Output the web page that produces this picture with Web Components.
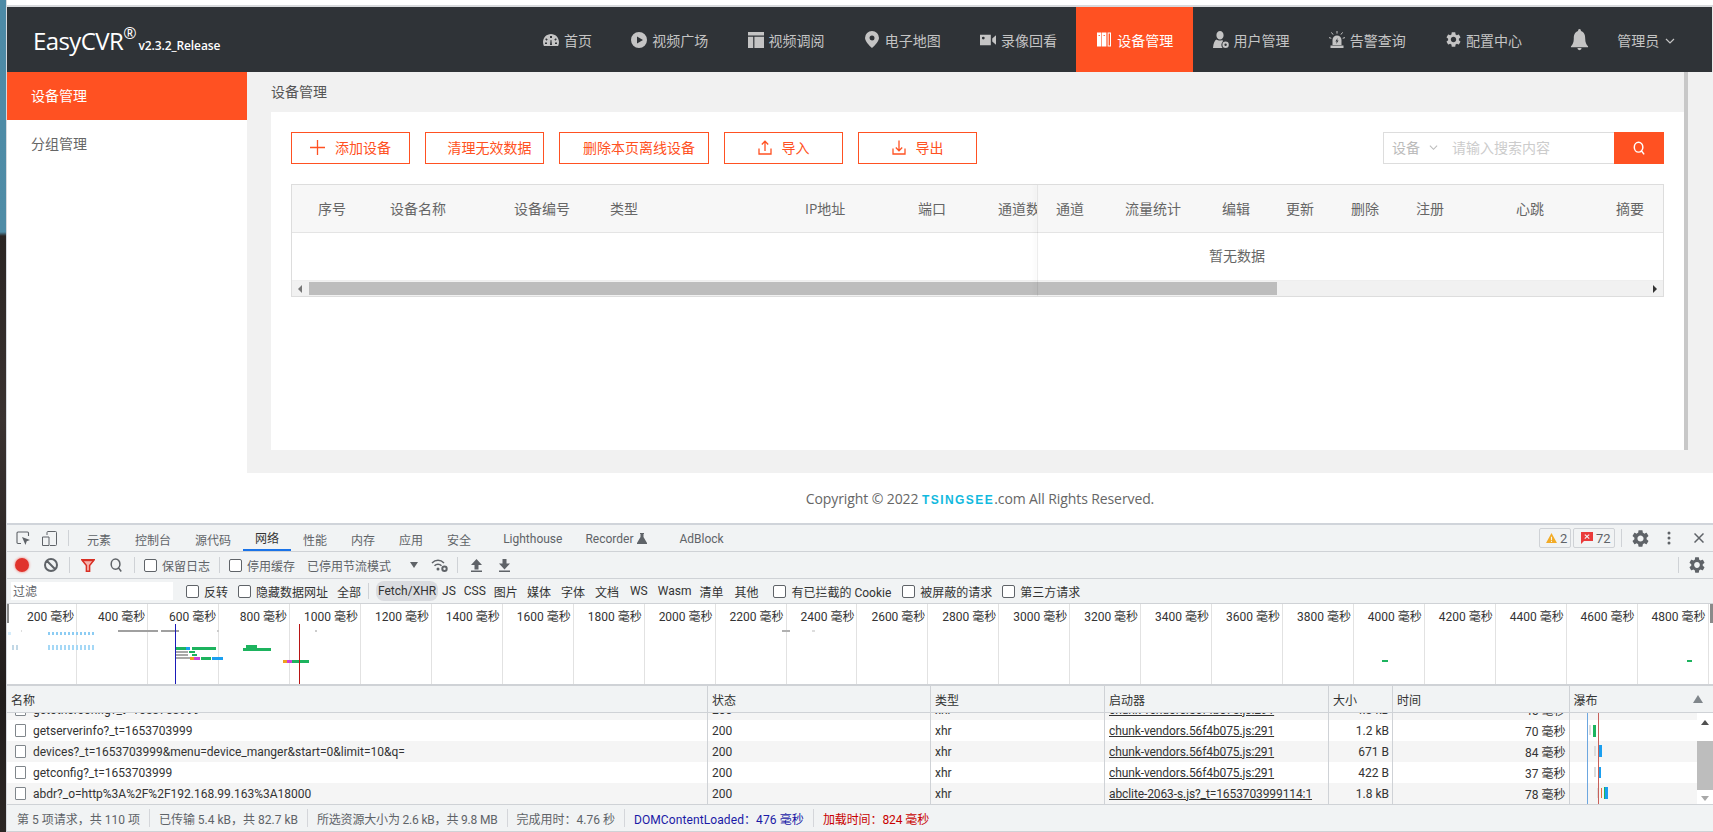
<!DOCTYPE html>
<html lang="zh">
<head>
<meta charset="utf-8">
<title>EasyCVR</title>
<style>
    html, body{ margin: 0; height: 832px; overflow: hidden; }
    body{
        display: flex;
        flex-direction: row;
        font-family: "Open Sans", "Noto Sans CJK SC", sans-serif;
        font-size: 14px;
        color: #666;
    }
</style>
</head>
<body>

<template cvr-wall>
    <style>
        :host{
            display: block;
            width: 6px;
            flex: none;
            background: linear-gradient(#4d8aa6 0, #4f8ca6 232px, #2a2523 236px, #3a3230 420px, #211d1c 700px, #2c2624 832px);
        }
    </style>
</template>

<template cvr-window>
    <style>
        :host{
            display: flex;
            flex-direction: column;
            flex: 1;
            min-width: 0;
            background: #fff;
            border-left: 1px solid #d6d9de;
        }
        #top{
            height: 5px;
            border-bottom: 2px solid #d8dadd;
        }
    </style>
    <div id=top></div>
    <slot></slot>
</template>

<template cvr-nav>
    <style>
        :host{
            display: flex;
            flex-direction: row;
            height: 65px;
            flex: none;
            background: #2f3337;
            color: #c4c4c4;
            border-right: 1px solid #e8e8e8;
        }
        #logo{
            width: 516px;
            padding-left: 26px;
            display: flex;
            align-items: baseline;
            color: #fff;
            padding-top: 12px;
            box-sizing: border-box;
            line-height: 44px;
            white-space: nowrap;
        }
        #name{ font-size: 24px; letter-spacing: -.6px; }
        sup{ font-size: 16px; line-height: 0; position: relative; top: -11px; margin: 0 2px 0 0; }
        #ver{ font-size: 12px; font-weight: 600; letter-spacing: -.1px; }
        nav{ display: flex; flex-direction: row; }
        #right{
            display: flex;
            align-items: center;
            padding-left: 29px;
        }
        #user{ margin-left: 28px; margin-right: 6px; white-space: nowrap; }
        #chev{ margin-top: 2px; }
    </style>
    <div id=logo><span id=name>EasyCVR</span><sup>®</sup><span id=ver>v2.3.2_Release</span></div>
    <nav><slot></slot></nav>
    <div id=right>
        <cvr-icon name=bell w=19 h=22></cvr-icon>
        <span id=user>管理员</span>
        <cvr-icon id=chev name=chevron w=10 h=10></cvr-icon>
    </div>
</template>

<template cvr-nav-item>
    <style>
        :host{
            display: flex;
            align-items: center;
            height: 65px;
            padding-left: 20px;
            padding-right: 19.25px;
            white-space: nowrap;
            cursor: pointer;
        }
        :host([active]){
            background: #ff5122;
            color: #fff;
        }
        #ico{ width: 16px; margin-right: 5px; display: flex; justify-content: center; }
    </style>
    <div id=ico></div>
    <slot></slot>
</template>

<template cvr-body>
    <style>
        :host{
            display: flex;
            flex-direction: row;
            height: 451px;
            flex: none;
        }
        #main{
            flex: 1;
            min-width: 0;
            display: flex;
            flex-direction: column;
        }
    </style>
    <slot name=side></slot>
    <div id=main><slot></slot></div>
</template>

<template cvr-side>
    <style>
        :host{
            display: block;
            width: 240px;
            flex: none;
            background: #fff;
        }
    </style>
    <slot></slot>
</template>

<template cvr-side-item>
    <style>
        :host{
            display: flex;
            align-items: center;
            height: 48px;
            box-sizing: border-box;
            padding-left: 24px;
            padding-bottom: 2px;
            color: #666;
            cursor: pointer;
        }
        :host([active]){
            background: #ff5122;
            color: #fff;
        }
    </style>
    <slot></slot>
</template>

<template cvr-panel>
    <style>
        :host{
            display: flex;
            flex-direction: row;
            height: 401px;
            flex: none;
            background: #f1f1f1;
        }
        #col{
            flex: 1;
            min-width: 0;
            padding-left: 24px;
        }
        #title{
            height: 40px;
            line-height: 40px;
            color: #555;
        }
        #card{
            height: 338px;
            box-sizing: border-box;
            padding: 20px;
            background: #fff;
        }
        #bar{
            width: 4px;
            height: 378px;
            background: #c8c8c8;
            margin-right: 25px;
        }
    </style>
    <div id=col>
        <div id=title>设备管理</div>
        <div id=card><slot></slot></div>
    </div>
    <div id=bar></div>
</template>

<template cvr-tools>
    <style>
        :host{
            display: flex;
            flex-direction: row;
            gap: 15px;
            height: 32px;
        }
        #space{ flex: 1; }
    </style>
    <slot></slot>
    <div id=space></div>
    <slot name=end></slot>
</template>

<template cvr-btn>
    <style>
        :host{
            display: flex;
            align-items: center;
            justify-content: center;
            box-sizing: border-box;
            width: 119px;
            height: 32px;
            border: 1px solid #ff5122;
            padding-bottom: 2px;
            color: #ff5122;
            cursor: pointer;
            white-space: nowrap;
        }
        #ico{ margin-right: 10px; display: flex; }
    </style>
    <div id=ico></div>
    <slot></slot>
</template>

<template cvr-search>
    <style>
        :host{
            display: flex;
            flex-direction: row;
            width: 281px;
            height: 32px;
        }
        #box{
            flex: 1;
            display: flex;
            align-items: center;
            box-sizing: border-box;
            border: 1px solid #ddd;
            border-right: 0;
            padding-left: 8px;
            padding-bottom: 2px;
            color: #bbb;
            white-space: nowrap;
        }
        #ph{ margin-left: 14px; color: #ccc; }
        #sel{ margin-left: 9px; }
        #go{
            width: 50px;
            background: #ff5122;
            color: #fff;
            display: flex;
            align-items: center;
            justify-content: center;
        }
    </style>
    <div id=box>
        <span>设备</span>
        <cvr-icon id=sel name=chevron w=9 h=9></cvr-icon>
        <span id=ph>请输入搜索内容</span>
    </div>
    <div id=go><cvr-icon name=search w=12 h=14></cvr-icon></div>
</template>

<template cvr-table>
    <style>
        :host{
            display: block;
            position: relative;
            margin-top: 20px;
            height: 113px;
            box-sizing: border-box;
            border: 1px solid #ddd;
            color: #666;
        }
        #panes{
            display: flex;
            flex-direction: row;
            height: 95px;
        }
        .head{
            display: grid;
            align-items: center;
            background: #f7f7f7;
            border-bottom: 1px solid #e4e4e4;
            white-space: nowrap;
            overflow: hidden;
            padding-bottom: 1px;
            height: 46px;
        }
        #left{ width: 745px; flex: none; overflow: hidden; }
        #left .head{
            padding-left: 26px;
            grid-template-columns: 72px 124px 96px 195px 113px 80px 1fr;
        }
        #right{ flex: 1; min-width: 0; }
        #right .head{
            padding-left: 19px;
            grid-template-columns: 69px 97px 64px 65px 65px 100px 100px 1fr;
        }
        #empty{
            height: 43px;
            padding-bottom: 4px;
            padding-left: 172px;
            display: flex;
            align-items: center;
            color: #666;
        }
        #scroll{
            display: flex;
            align-items: center;
            height: 16px;
            background: #f1f1f1;
            border-top: 1px solid #eee;
            box-sizing: border-box;
        }
        #thumb{
            width: 968px;
            height: 13px;
            margin-left: 7px;
            background: #bdbdbd;
        }
        #space{ flex: 1; }
        .arr{ width: 0; height: 0; border: 4px solid transparent; }
        #al{ border-right: 4px solid #777; border-left: 0; margin-left: 6px; }
        #ar{ border-left: 4px solid #333; border-right: 0; margin-right: 6px; }
        #fix{
            position: absolute;
            left: 745px;
            top: 0;
            bottom: 0;
            width: 1px;
            background: rgba(0,0,0,.07);
            box-shadow: -2px 0 4px rgba(0,0,0,.09);
        }
    </style>
    <div id=panes>
        <div id=left>
            <div class=head id=lh></div>
        </div>
        <div id=right>
            <div class=head id=rh></div>
            <div id=empty><span>暂无数据</span></div>
        </div>
    </div>
    <div id=scroll>
        <div class=arr id=al></div>
        <div id=thumb></div>
        <div id=space></div>
        <div class=arr id=ar></div>
    </div>
    <div id=fix></div>
</template>

<template cvr-footer>
    <style>
        :host{
            display: flex;
            justify-content: center;
            align-items: center;
            height: 50px;
            flex: none;
            background: #fff;
            color: #666;
            white-space: nowrap;
            box-sizing: border-box;
        }
        span{ letter-spacing: -.1px; }
        b{
            display: inline-block;
            color: #12b9de;
            font-family: "Liberation Sans", sans-serif;
            font-size: 12px;
            line-height: 12px;
            font-weight: 700;
            letter-spacing: 1.45px;
            text-transform: uppercase;
        }
    </style>
    <span>Copyright © 2022 <b>Tsingsee</b>.com All Rights Reserved.</span>
</template>

<template dev-tools>
    <style>
        :host{
            display: flex;
            flex-direction: column;
            flex: 1;
            min-height: 0;
            background: #f1f3f4;
            border-top: 2px solid #d0d4da;
            font-family: Roboto, "Noto Sans CJK SC", sans-serif;
            font-size: 12px;
            color: #5f6368;
        }
    </style>
    <slot></slot>
</template>

<template dev-bar>
    <style>
        :host{
            display: flex;
            flex-direction: row;
            align-items: center;
            flex: none;
            box-sizing: border-box;
            height: 27px;
            border-bottom: 1px solid #cfd2d6;
            white-space: nowrap;
        }
    </style>
    <slot></slot>
</template>

<template dev-tab>
    <style>
        :host{
            display: flex;
            align-items: center;
            height: 26px;
            box-sizing: border-box;
            padding: 2px 12px 0;
            cursor: default;
        }
        :host([active]){
            border-bottom: 2px solid #1a73e8;
            padding-top: 0;
            color: #333;
        }
    </style>
    <slot></slot>
</template>

<template dev-check>
    <style>
        :host{
            display: inline-flex;
            align-items: center;
            gap: 5px;
        }
        i{
            display: block;
            width: 11px;
            height: 11px;
            border: 1px solid #5f6368;
            border-radius: 2px;
            background: #fff;
        }
    </style>
    <i></i><slot></slot>
</template>

<template dev-overview>
    <style>
        :host{
            display: block;
            position: relative;
            flex: none;
            height: 80px;
            background: #fff;
            border-bottom: 2px solid #cfd2d6;
            overflow: hidden;
            color: #333;
        }
        #grid{
            display: flex;
            flex-direction: row;
            height: 80px;
        }
        .c{
            flex: none;
            width: 70.93px;
            box-sizing: border-box;
            border-right: 1px solid #e2e2e2;
            text-align: right;
            padding-right: 2px;
            line-height: 26px;
            white-space: nowrap;
        }
        .c:first-child{ width: 70.3px; }
        .m{ position: absolute; }
    </style>
    <div id=grid></div>
</template>

<template dev-net>
    <style>
        :host{
            display: block;
            flex: none;
            color: #333;
        }
        #head{
            display: grid;
            grid-template-columns: 701px 223px 174px 224px 64px 176.5px 1fr;
            height: 27px;
            box-sizing: border-box;
            border-bottom: 1px solid #cfd2d6;
            background: #f1f3f4;
        }
        #head div{
            display: flex;
            align-items: center;
            padding-left: 4px;
            border-right: 1px solid #cfd2d6;
        }
        #head div:last-child{ border-right: 0; justify-content: space-between; padding-right: 10px; }
        #tri{ width: 0; height: 0; border: 5px solid transparent; border-top: 0; border-bottom: 8px solid #80868b; }
        #wrap{
            display: flex;
            flex-direction: row;
            height: 91px;
            overflow: hidden;
        }
        #rows{
            flex: 1;
            min-width: 0;
            position: relative;
        }
        #list{ margin-top: -14px; }
        #sb{
            flex: none;
            width: 16px;
            background: #fff;
            display: flex;
            flex-direction: column;
            align-items: center;
        }
        #t{ width: 100%; height: 49px; background: #bdbdbd; margin-top: 16px; }
        .tr{ width: 0; height: 0; border: 4px solid transparent; }
        #up{ border-top: 0; border-bottom: 5px solid #505050; margin-top: 7px; }
        #dn{ border-bottom: 0; border-top: 5px solid #a8a8a8; margin-top: 6px; }
        .v{ position: absolute; top: 0; bottom: 0; width: 1px; }
    </style>
    <div id=head>
        <div>名称</div><div>状态</div><div>类型</div><div>启动器</div><div>大小</div><div>时间</div><div>瀑布<span id=tri></span></div>
    </div>
    <div id=wrap>
        <div id=rows>
            <div id=list><slot></slot></div>
            <div class=v style="left:1580px;background:#6da7e0"></div>
            <div class=v style="left:1591px;background:#c8605a"></div>
        </div>
        <div id=sb>
            <div class=tr id=up></div>
            <div id=t></div>
            <div class=tr id=dn></div>
        </div>
    </div>
</template>

<template dev-row>
    <style>
        :host{
            display: grid;
            grid-template-columns: 701px 223px 174px 224px 64px 176.5px 1fr;
            height: 21px;
            align-items: center;
            white-space: nowrap;
            background: #fff;
        }
        :host([alt]){ background: #f5f5f5; }
        :host>div{
            height: 21px;
            display: flex;
            align-items: center;
            padding-left: 4px;
            border-right: 1px solid #cfd2d6;
            box-sizing: border-box;
            overflow: hidden;
        }
        #name i{
            display: block;
            width: 9px;
            height: 11px;
            border: 1px solid #80868b;
            border-radius: 1px;
            margin: 0 7px 0 4px;
            background: #fff;
            flex: none;
        }
        #ini{ text-decoration: underline; letter-spacing: -.1px; }
        .r{ justify-content: flex-end; padding: 0 3px 0 0; }
        #fall{ border-right: 0; position: relative; overflow: visible; }
        #fall span{ position: absolute; }
    </style>
    <div id=name><i></i><span id=n></span></div>
    <div id=st>200</div>
    <div>xhr</div>
    <div id=ini></div>
    <div class=r id=sz></div>
    <div class=r id=tm></div>
    <div id=fall></div>
</template>

<template dev-status>
    <style>
        :host{
            display: flex;
            flex-direction: row;
            align-items: center;
            box-sizing: border-box;
            flex: none;
            height: 28px;
            border-top: 1px solid #cfd2d6;
            border-bottom: 1px solid #cfd2d6;
            padding-left: 1px;
            white-space: nowrap;
        }
    </style>
    <slot></slot>
</template>

<template dev-stat>
    <style>
        :host{
            display: flex;
            align-items: center;
            height: 18px;
            padding: 0 9px;
            border-right: 1px solid #d4d6da;
        }
        :host(:last-child){ border-right: 0; }
    </style>
    <slot></slot>
</template>

<cvr-wall></cvr-wall>
<cvr-window>
    <cvr-nav>
        <cvr-nav-item icon=dash>首页</cvr-nav-item>
        <cvr-nav-item icon=play>视频广场</cvr-nav-item>
        <cvr-nav-item icon=layout>视频调阅</cvr-nav-item>
        <cvr-nav-item icon=pin>电子地图</cvr-nav-item>
        <cvr-nav-item icon=video>录像回看</cvr-nav-item>
        <cvr-nav-item icon=books active>设备管理</cvr-nav-item>
        <cvr-nav-item icon=user>用户管理</cvr-nav-item>
        <cvr-nav-item icon=alarm>告警查询</cvr-nav-item>
        <cvr-nav-item icon=gear>配置中心</cvr-nav-item>
    </cvr-nav>
    <cvr-body>
        <cvr-side slot=side>
            <cvr-side-item active>设备管理</cvr-side-item>
            <cvr-side-item>分组管理</cvr-side-item>
        </cvr-side>
        <cvr-panel>
            <cvr-tools>
                <cvr-btn icon=plus>添加设备</cvr-btn>
                <cvr-btn>清理无效数据</cvr-btn>
                <cvr-btn style="width:150px">删除本页离线设备</cvr-btn>
                <cvr-btn icon=upload>导入</cvr-btn>
                <cvr-btn icon=download>导出</cvr-btn>
                <cvr-search slot=end></cvr-search>
            </cvr-tools>
            <cvr-table></cvr-table>
        </cvr-panel>
        <cvr-footer></cvr-footer>
    </cvr-body>
    <dev-tools>
        <dev-bar style="padding-left:9px">
            <cvr-icon name=inspect w=14 h=14 style="color:#5f6368"></cvr-icon>
            <cvr-icon name=device w=15 h=15 style="color:#5f6368;margin-left:12px"></cvr-icon>
            <span style="width:1px;height:16px;background:#cfd2d6;margin:0 6px 0 11px"></span>
            <dev-tab>元素</dev-tab>
            <dev-tab>控制台</dev-tab>
            <dev-tab>源代码</dev-tab>
            <dev-tab active>网络</dev-tab>
            <dev-tab>性能</dev-tab>
            <dev-tab>内存</dev-tab>
            <dev-tab>应用</dev-tab>
            <dev-tab>安全</dev-tab>
            <dev-tab style="margin-left:8px">Lighthouse</dev-tab>
            <dev-tab style="padding-right:4px;margin-left:-1px">Recorder</dev-tab>
            <cvr-icon name=flask w=10 h=11 style="color:#5f6368"></cvr-icon>
            <dev-tab style="margin-left:20px">AdBlock</dev-tab>
            <span style="flex:1"></span>
            <span style="display:flex;align-items:center;gap:3px;height:20px;box-sizing:border-box;width:32px;padding-left:6px;border:1px solid #cfd2d6;border-radius:2px;font-size:13px"><cvr-icon name=warn w=11 h=10 style="color:#f2ab26"></cvr-icon>2</span>
            <span style="display:flex;align-items:center;gap:3px;height:20px;box-sizing:border-box;width:42px;padding-left:7px;margin-left:2px;border:1px solid #cfd2d6;border-radius:2px;font-size:13px"><cvr-icon name=err w=12 h=12 style="color:#ea3b3b"></cvr-icon>72</span>
            <span style="width:1px;height:18px;background:#cfd2d6;margin:0 10px 0 6px"></span>
            <cvr-icon name=gear w=17 h=17 style="color:#5f6368"></cvr-icon>
            <cvr-icon name=dots w=4 h=14 style="color:#5f6368;margin-left:18px"></cvr-icon>
            <cvr-icon name=close w=10 h=10 style="color:#5f6368;margin:0 9px 0 23px"></cvr-icon>
        </dev-bar>
        <dev-bar style="padding-left:8px">
            <span style="width:14px;height:14px;border-radius:50%;background:#e0332c;box-shadow:0 0 2px 1px #f1b9b5"></span>
            <cvr-icon name=stop w=14 h=14 style="color:#5f6368;margin-left:15px"></cvr-icon>
            <span style="width:1px;height:16px;background:#cfd2d6;margin:0 11px 0 11px"></span>
            <cvr-icon name=filter w=14 h=13 style="color:#d93025"></cvr-icon>
            <cvr-icon name=search w=14 h=14 style="color:#5f6368;margin-left:14px"></cvr-icon>
            <span style="width:1px;height:16px;background:#cfd2d6;margin:0 9px 0 11px"></span>
            <dev-check>保留日志</dev-check>
            <span style="width:1px;height:16px;background:#cfd2d6;margin:0 9px 0 9px"></span>
            <dev-check>停用缓存</dev-check>
            <span style="margin-left:12px">已停用节流模式</span>
            <span style="width:0;height:0;border:4px solid transparent;border-bottom:0;border-top:6px solid #5f6368;margin-left:19px"></span>
            <cvr-icon name=wifi w=17 h=14 style="color:#5f6368;margin-left:13px"></cvr-icon>
            <span style="width:1px;height:16px;background:#cfd2d6;margin:0 10px 0 9px"></span>
            <cvr-icon name=upa w=11 h=13 style="color:#5f6368;margin-left:3px"></cvr-icon>
            <cvr-icon name=downa w=11 h=13 style="color:#5f6368;margin-left:17px"></cvr-icon>
            <span style="flex:1"></span>
            <span style="width:1px;height:16px;background:#cfd2d6;margin-right:10px"></span>
            <cvr-icon name=gear w=16 h=16 style="color:#5f6368;margin-right:8px"></cvr-icon>
        </dev-bar>
        <dev-bar style="height:25px;color:#333">
            <span style="width:162px;height:18px;line-height:20px;background:#fff;margin-left:4px;padding-left:2px;box-sizing:border-box;color:#5f6368">过滤</span>
            <dev-check style="margin-left:13px">反转</dev-check>
            <dev-check style="margin-left:10px">隐藏数据网址</dev-check>
            <span style="margin-left:9px">全部</span>
            <span style="width:1px;height:16px;background:#cfd2d6;margin:0 7px 0 7px"></span>
            <span style="background:#dadce0;border-radius:8px;height:20px;line-height:20px;width:62px;text-align:center">Fetch/XHR</span>
            <span style="margin-left:4px">JS</span>
            <span style="margin-left:8px">CSS</span>
            <span style="margin-left:8px">图片</span>
            <span style="margin-left:9px">媒体</span>
            <span style="margin-left:10px">字体</span>
            <span style="margin-left:10px">文档</span>
            <span style="margin-left:11px">WS</span>
            <span style="margin-left:10px">Wasm</span>
            <span style="margin-left:8px">清单</span>
            <span style="margin-left:11px">其他</span>
            <dev-check style="margin-left:15px">有已拦截的 Cookie</dev-check>
            <dev-check style="margin-left:11px">被屏蔽的请求</dev-check>
            <dev-check style="margin-left:10px">第三方请求</dev-check>
        </dev-bar>
        <dev-overview></dev-overview>
        <dev-net>
            <dev-row alt name="getotherconfig?_t=1653703999" ini="chunk-vendors.56f4b075.js:291" sz="4.3 kB" tm="45 毫秒" fall="c"></dev-row>
            <dev-row name="getserverinfo?_t=1653703999" ini="chunk-vendors.56f4b075.js:291" sz="1.2 kB" tm="70 毫秒" fall="g"></dev-row>
            <dev-row alt name="devices?_t=1653703999&amp;menu=device_manger&amp;start=0&amp;limit=10&amp;q=" ini="chunk-vendors.56f4b075.js:291" sz="671 B" tm="84 毫秒" fall="b"></dev-row>
            <dev-row name="getconfig?_t=1653703999" ini="chunk-vendors.56f4b075.js:291" sz="422 B" tm="37 毫秒" fall="s"></dev-row>
            <dev-row alt name="abdr?_o=http%3A%2F%2F192.168.99.163%3A18000" ini="abclite-2063-s.js?_t=1653703999114:1" sz="1.8 kB" tm="78 毫秒" fall="a"></dev-row>
        </dev-net>
        <dev-status>
            <dev-stat>第 5 项请求，共 110 项</dev-stat>
            <dev-stat>已传输 5.4 kB，共 82.7 kB</dev-stat>
            <dev-stat style="letter-spacing:-.18px">所选资源大小为 2.6 kB，共 9.8 MB</dev-stat>
            <dev-stat>完成用时：4.76 秒</dev-stat>
            <dev-stat style="color:#1a1aa6;letter-spacing:.1px">DOMContentLoaded：476 毫秒</dev-stat>
            <dev-stat style="color:#c80000;letter-spacing:-.1px">加载时间：824 毫秒</dev-stat>
        </dev-status>
    </dev-tools>
</cvr-window>

<script>
    const GEAR = 'M19.14 12.94c.04-.3.06-.61.06-.94 0-.32-.02-.64-.07-.94l2.03-1.58c.18-.14.23-.41.12-.61l-1.92-3.32c-.12-.22-.37-.29-.59-.22l-2.39.96c-.5-.38-1.03-.7-1.62-.94l-.36-2.54c-.04-.24-.24-.41-.48-.41h-3.84c-.24 0-.43.17-.47.41l-.36 2.54c-.59.24-1.13.57-1.62.94l-2.39-.96c-.22-.08-.47 0-.59.22L2.74 8.87c-.12.21-.08.47.12.61l2.03 1.58c-.05.3-.09.63-.09.94s.02.64.07.94l-2.03 1.58c-.18.14-.23.41-.12.61l1.92 3.32c.12.22.37.29.59.22l2.39-.96c.5.38 1.03.7 1.62.94l.36 2.54c.05.24.24.41.48.41h3.84c.24 0 .44-.17.47-.41l.36-2.54c.59-.24 1.13-.56 1.62-.94l2.39.96c.22.08.47 0 .59-.22l1.92-3.32c.12-.22.07-.47-.12-.61l-2.01-1.58zM12 15.6c-1.98 0-3.6-1.62-3.6-3.6s1.62-3.6 3.6-3.6 3.6 1.62 3.6 3.6-1.62 3.6-3.6 3.6z'
    const fill = d => `<path fill="currentColor" fill-rule="evenodd" d="${d}"/>`
    const line = (d, w) => `<path fill="none" stroke="currentColor" stroke-width="${w || 1.2}" d="${d}"/>`

    // viewBox, content
    const ICONS = {
        dash: ['0 0 16 16', fill('M8 2C3.6 2 0 5.6 0 10c0 1.3.3 2.6.9 4h14.2c.6-1.4.9-2.7.9-4 0-4.4-3.6-8-8-8zM7 4h2v2H7zM3.2 6.2l1.5 1.4-1 1.1-1.5-1.5zM11.3 7.6l1.5-1.4 1 1-1.5 1.5zM7 13l.6-5h.8l.6 5zM2 10.5h2v1.6H2zM12 10.5h2v1.6h-2z')],
        play: ['0 0 16 16', fill('M8 0a8 8 0 1 0 0 16A8 8 0 0 0 8 0zM6 4.5l6 3.5-6 3.5z')],
        layout: ['0 0 16 16', fill('M0 0h16v3.4H0zM0 4.8h5.2V16H0zM6.4 4.8H16V16H6.4z')],
        pin: ['0 0 14 17', fill('M7 0a7 7 0 0 0-7 7c0 4 7 10 7 10s7-6 7-10a7 7 0 0 0-7-7zm0 4.5a2.5 2.5 0 1 1 0 5 2.5 2.5 0 0 1 0-5z')],
        video: ['0 0 17 14', fill('M0 1.5h11.5v11H0zM3.5 3.5a1.5 1.5 0 1 0 0 3 1.5 1.5 0 0 0 0-3zM13 5.5l4-3.5v10l-4-3.5z')],
        books: ['0 0 14 15', fill('M0 .5h4.4v14H0zM5 .5h4.4v14H5zM10.6.5H14v14h-3.4zM11.6 1.6v11.8H13V1.6zM1.6 3v1h1.2V3zM6.6 3v1h1.2V3z')],
        user: ['0 0 16 17', fill('M7 0c2 0 3.6 1.8 3.6 4.2S9 8.6 7 8.6 3.4 6.6 3.4 4.2 5 0 7 0zM3.6 8.6C1.4 9.6.4 12.6 0 17h9.6a4.4 4.4 0 0 1 .3-6.4C9.4 9.8 9.4 9.4 10 8.8 9 9.8 5 10 3.6 8.6zM12.6 10.6a3.2 3.2 0 1 0 0 6.4 3.2 3.2 0 0 0 0-6.4zm0 2a1.2 1.2 0 1 1 0 2.4 1.2 1.2 0 0 1 0-2.4z')],
        alarm: ['0 0 16 17', fill('M3.5 14V9a4.5 4.5 0 0 1 9 0v5zM8.6 7L6.4 10.6h1.4l-.6 2.4 2.4-3.6H8.2zM1.5 14.6h13V17h-13z') + line('M8 0v2.6M2.4 1.4l1.7 2.2M13.6 1.4l-1.7 2.2M0 6.6l2.3.7M16 6.6l-2.3.7', 1)],
        gear: ['2 2 20 20', fill(GEAR)],
        bell: ['0 0 20 23', fill('M10 0c1 0 1.5.8 1.5 1.9C15.2 3 16 6.2 16 10c0 4.2 1.2 6.4 3 8.2V19H1v-.8c1.800-1.800 3-4 3-8.200 0-3.800.8-7 4.500-8.100C8.500.8 9 0 10 0zM7.800 20h4.400a2.200 2.200 0 0 1-4.400 0z')],
        chevron: ['0 0 10 10', line('M1 3l4 4 4-4')],
        plus: ['0 0 15 15', line('M7.500 0v15M0 7.500h15', 1.300)],
        upload: ['0 0 14 15', line('M7 11V1.500M3.800 4.500L7 1.200l3.200 3.300M1 8.500v5.500h12V8.500', 1.300)],
        download: ['0 0 14 15', line('M7 .5V10.500M3.800 7.500L7 10.800l3.200-3.300M1 8.500v5.500h12V8.500', 1.300)],
        search: ['0 0 14 16', line('M6.500 1.200a5 5.800 0 1 0 0 11.600 5 5.800 0 0 0 0-11.600zM10 11.500l3 4', 1.700)],
        inspect: ['0 0 14 14', fill('M6 6l8 3-3.300 1.200L9.500 14z') + line('M5 12.500H2a1 1 0 0 1-1-1V2a1 1 0 0 1 1-1h9.500a1 1 0 0 1 1 1v3', 1.100)],
        device: ['0 0 15 15', line('M5 4V1.500a1 1 0 0 1 1-1h7.500a1 1 0 0 1 1 1v12a1 1 0 0 1-1 1H8M.5 6h6.500v8.500H.5z', 1)],
        flask: ['0 0 10 11', fill('M3 0h4v1H6.500v3L10 10v1H0v-1l3.500-6V1H3z')],
        warn: ['0 0 12 11', fill('M6 0l6 11H0zM5.400 4v4h1.200V4zM5.400 8.800v1.200h1.200V8.800z')],
        err: ['0 0 12 12', fill('M0 0h12v9H3l-3 3zM4.200 2.200l-.8.800L5.200 4.500 3.400 6.200l.8.800L6 5.300l1.800 1.700.8-.8L6.800 4.500 8.600 3l-.8-.8L6 3.800z')],
        dots: ['0 0 4 14', fill('M2 .5a1.500 1.500 0 1 1 0 3 1.500 1.500 0 0 1 0-3zM2 5.500a1.500 1.500 0 1 1 0 3 1.500 1.500 0 0 1 0-3zM2 10.500a1.500 1.500 0 1 1 0 3 1.500 1.500 0 0 1 0-3z')],
        close: ['0 0 10 10', line('M.5.5l9 9M9.500.5l-9 9', 1.500)],
        stop: ['0 0 14 14', line('M7 1a6 6 0 1 0 0 12A6 6 0 0 0 7 1zM2.800 2.800l8.400 8.400', 2)],
        filter: ['0 0 14 13', `<path d="M.8 .8h12.400L8.600 6.500V12.300H5.400V6.500z" fill="#f6b4ae" stroke="currentColor" stroke-width="1.500"/><path d="M1 .2h12v2H1z" fill="currentColor"/>`],
        wifi: ['0 0 17 14', line('M1 5c3.500-3.600 8.500-3.600 12 0M3.500 7.800c2-2 5-2 7 0', 1.500) + fill('M7 9.500a1.500 1.500 0 1 0 0 3 1.500 1.500 0 0 0 0-3zM13.500 7.500a3.200 3.200 0 1 0 0 6.400 3.200 3.200 0 0 0 0-6.400zm0 2a1.200 1.200 0 1 1 0 2.400 1.200 1.200 0 0 1 0-2.400z')],
        upa: ['0 0 11 13', fill('M5.500 0L11 6H7.500v4.500h-4V6H0zM0 11.500h11V13H0z')],
        downa: ['0 0 11 13', fill('M3.500 0h4v4.500H11L5.500 10.500 0 4.500h3.500zM0 11.500h11V13H0z')]
    }

    const icon = (name, w, h) => {
        const [box, body] = ICONS[name]
        return `<svg width="${w}" height="${h}" viewBox="${box}" style="display:block">${body}</svg>`
    }

    // every element clones the template named after it
    class Base extends HTMLElement {
        constructor(){
            super()
            const template = document.querySelector(`template[${this.localName}]`).content
            this.attachShadow({ mode: 'open' }).appendChild(template.cloneNode(true))
        }
        $(id) { return this.shadowRoot.getElementById(id) }
    }

    class CvrIcon extends HTMLElement {
        constructor(){
            super()
            this.attachShadow({ mode: 'open' })
        }
        connectedCallback(){
            const w = this.getAttribute('w'), h = this.getAttribute('h')
            this.shadowRoot.innerHTML = `<style>:host{display:block;flex:none;width:${w}px;height:${h}px}</style>` + icon(this.getAttribute('name'), w, h)
        }
    }
    customElements.define('cvr-icon', CvrIcon)

    const NAV_SIZE = { dash: [16, 16], play: [16, 16], layout: [16, 16], pin: [14, 17], video: [17, 14], books: [14, 15], user: [16, 17], alarm: [16, 17], gear: [15, 15] }

    class NavItem extends Base {
        connectedCallback(){
            const name = this.getAttribute('icon')
            this.$('ico').innerHTML = icon(name, ...NAV_SIZE[name])
        }
    }

    class Btn extends Base {
        connectedCallback(){
            const name = this.getAttribute('icon')
            if (name) this.$('ico').innerHTML = icon(name, name == 'plus' ? 15 : 14, 15)
        }
    }

    class CvrTable extends Base {
        connectedCallback(){
            const cells = names => names.map(n => `<div>${n}</div>`).join('')
            this.$('lh').innerHTML = cells(['序号', '设备名称', '设备编号', '类型', 'IP地址', '端口', '通道数'])
            this.$('rh').innerHTML = cells(['通道', '流量统计', '编辑', '更新', '删除', '注册', '心跳', '摘要'])
        }
    }

    class DevOverview extends Base {
        connectedCallback(){
            let html = ''
            for (let i = 1; i <= 24; i++) html += `<div class=c>${i * 200} 毫秒</div>`
            this.$('grid').innerHTML = html
            const speck = c => `repeating-linear-gradient(90deg,${c} 0 2px,transparent 2px 4px)`
            // page coordinates of the timeline marks: x, y, width, height, colour
            const marks = [
                [8, 632, 3, 3, '#d5ecfa'], [21, 630, 1, 2, '#ddd'],
                [12, 645, 6, 5, speck('#c2d8e6')],
                [48, 632, 47, 3, speck('#8cccf3')],
                [48, 645, 48, 5, speck('#a5d8f6')],
                [118, 630, 40, 2, '#a0a0a0'], [161, 630, 18, 2, '#a0a0a0'], [217, 630, 2, 2, '#ccc'], [315, 630, 2, 2, '#ccc'],
                [176, 647, 10, 3, '#1db35e'], [186, 647, 4, 3, '#1a9ff0'], [192, 647, 24, 3, '#1db35e'],
                [176, 651, 12, 2, '#a8a8a8'], [176, 654, 12, 2, '#a8a8a8'], [176, 657, 14, 2, '#a8a8a8'],
                [189, 651, 6, 2, '#1db35e'], [192, 654, 5, 2, '#1db35e'],
                [190, 657, 4, 3, '#f0a020'], [194, 657, 6, 3, '#d040d8'], [201, 657, 10, 3, '#1db35e'], [212, 657, 11, 3, '#1a9ff0'],
                [246, 645, 11, 3, '#1db35e'], [243, 648, 28, 3, '#1db35e'],
                [283, 660, 4, 3, '#f0a020'], [287, 660, 5, 3, '#d040d8'], [292, 660, 17, 3, '#1db35e'],
                [782, 630, 8, 2, '#b0b0b0'], [812, 630, 3, 2, '#ddd'],
                [1382, 660, 6, 2, '#1db35e'], [1687, 660, 5, 2, '#1db35e'],
                [175, 624, 1, 60, '#1a1ab8'], [299, 624, 1, 60, '#b81414'],
                [7, 604, 2, 19, '#8a8a8a'], [1710, 604, 3, 19, '#8a8a8a']
            ]
            for (const [x, y, w, h, c] of marks) {
                const m = document.createElement('div')
                m.className = 'm'
                m.style.cssText = `left:${x - 7}px;top:${y - 604}px;width:${w}px;height:${h}px;background:${c}`
                this.shadowRoot.appendChild(m)
            }
        }
    }

    // waterfall bars per row, x from the left of the cell at 1570
    const FALL = {
        c: [[21, 0, 2, 8, '#1ab5c8']],
        g: [[19, 5, 2, 10, '#ddd'], [23, 5, 3, 12, '#1db35e']],
        b: [[24, 5, 2, 10, '#ddd'], [28, 4, 1, 12, '#333'], [29, 4, 3, 12, '#1a9ff0']],
        s: [[24, 5, 2, 10, '#ddd'], [28, 5, 1, 11, '#333'], [29, 5, 2, 11, '#1a9ff0']],
        a: [[27, 5, 2, 10, '#ddd'], [31, 5, 1, 10, '#e8703a'], [34, 4, 1, 12, '#1db35e'], [35, 4, 3, 12, '#1a9ff0']]
    }

    class DevRow extends Base {
        connectedCallback(){
            this.$('n').textContent = this.getAttribute('name')
            this.$('ini').textContent = this.getAttribute('ini')
            this.$('sz').textContent = this.getAttribute('sz')
            this.$('tm').textContent = this.getAttribute('tm')
            this.$('fall').innerHTML = FALL[this.getAttribute('fall')].map(([x, y, w, h, c]) =>
                `<span style="left:${x}px;top:${y}px;width:${w}px;height:${h}px;background:${c}"></span>`).join('')
        }
    }

    const plain = ['cvr-wall', 'cvr-window', 'cvr-nav', 'cvr-body', 'cvr-side', 'cvr-side-item', 'cvr-panel', 'cvr-tools', 'cvr-search', 'cvr-footer',
        'dev-tools', 'dev-bar', 'dev-tab', 'dev-check', 'dev-net', 'dev-status', 'dev-stat']
    for (const name of plain) customElements.define(name, class extends Base {})
    customElements.define('cvr-nav-item', NavItem)
    customElements.define('cvr-btn', Btn)
    customElements.define('cvr-table', CvrTable)
    customElements.define('dev-overview', DevOverview)
    customElements.define('dev-row', DevRow)
</script>
</body>
</html>
